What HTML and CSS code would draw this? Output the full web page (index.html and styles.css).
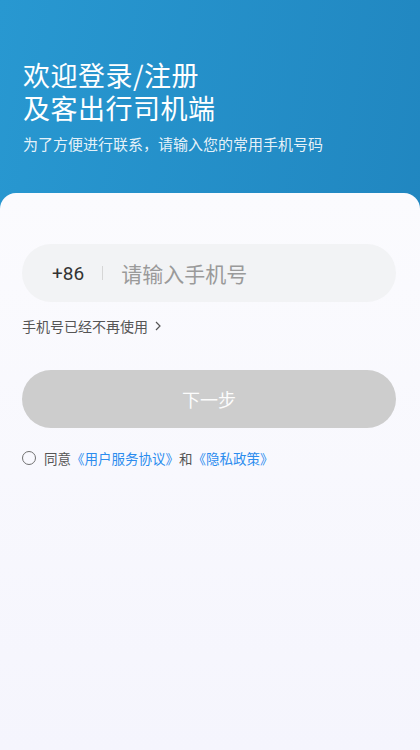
FILE: index.html
```html
<!DOCTYPE html>
<html lang="zh-CN">
<head>
  <meta charset="UTF-8" />
  <meta name="viewport" content="width=device-width, initial-scale=1.0" />
  <title>登录</title>
  <link rel="stylesheet" href="styles.css">
</head>
<body>
  <div class="page">
    <header class="hero">
      <h1>
        <span>欢迎登录/注册</span>
        <span>及客出行司机端</span>
      </h1>
      <p>为了方便进行联系，请输入您的常用手机号码</p>
    </header>
    <main class="card">
      <div class="phone-field">
        <span class="code">+86</span>
        <span class="divider"></span>
        <input type="tel" placeholder="请输入手机号" />
      </div>
      <a class="lost-phone" href="#">手机号已经不再使用
        <svg width="8" height="10" viewBox="0 0 8 10"><path d="M2 1l4 4-4 4" fill="none" stroke="#555" stroke-width="1.2"/></svg>
      </a>
      <button class="next" disabled>下一步</button>
      <label class="agree">
        <span class="radio"></span>
        <span>同意<a href="#">《用户服务协议》</a>和<a href="#">《隐私政策》</a></span>
      </label>
    </main>
  </div>
</body>
</html>
```

FILE: styles.css
```css
* {
  box-sizing: border-box;
}
body {
  margin: 0;
  font-family: "Noto Sans CJK SC", "Noto Sans", sans-serif;
  background: linear-gradient(100deg, #2898d1, #1f83bd);
}
.page {
  min-height: 750px;
  display: flex;
  flex-direction: column;
}
.hero {
  padding: 58px 23px 38px;
  color: #fff;
}
.hero h1 {
  margin: 0;
  font-size: 27px;
  font-weight: 400;
}
.hero h1 span {
  display: block;
  height: 33px;
  line-height: 33px;
  letter-spacing: 0.5px;
}
.hero p {
  margin: 9px 0 0;
  font-size: 15px;
  line-height: 22px;
  color: rgba(255, 255, 255, 0.9);
}
.card {
  flex: 1;
  background: linear-gradient(to bottom, #fbfbfe, #f5f5fd);
  border-radius: 16px 16px 0 0;
  padding: 51px 24px 0 22px;
}
.phone-field {
  height: 58px;
  border-radius: 29px;
  background: #f2f3f5;
  display: flex;
  align-items: center;
  padding-left: 30px;
}
.code {
  font-family: Roboto, "Noto Sans", sans-serif;
  font-size: 19px;
  color: #333;
}
.divider {
  width: 1px;
  height: 14px;
  background: #d6d6d6;
  margin: 0 18px;
}
.phone-field input {
  flex: 1;
  border: none;
  background: transparent;
  font-family: inherit;
  font-size: 21px;
  color: #333;
  outline: none;
  padding: 0;
}
.phone-field input::placeholder {
  color: #9a9a9a;
}
.lost-phone {
  display: flex;
  align-items: center;
  gap: 6px;
  margin-top: 14px;
  font-size: 14px;
  line-height: 20px;
  color: #555;
  text-decoration: none;
}
.next {
  display: block;
  width: 100%;
  height: 58px;
  margin-top: 34px;
  border: none;
  border-radius: 29px;
  background: #cdcdcd;
  color: #fcfcfc;
  font-family: inherit;
  font-size: 18px;
}
.agree {
  display: flex;
  align-items: center;
  gap: 8px;
  margin-top: 20px;
  font-size: 13.5px;
  line-height: 20px;
  color: #555;
}
.radio {
  width: 14px;
  height: 14px;
  border: 1.5px solid #707070;
  border-radius: 50%;
}
.agree a {
  color: #2b8cee;
  text-decoration: none;
}
```
